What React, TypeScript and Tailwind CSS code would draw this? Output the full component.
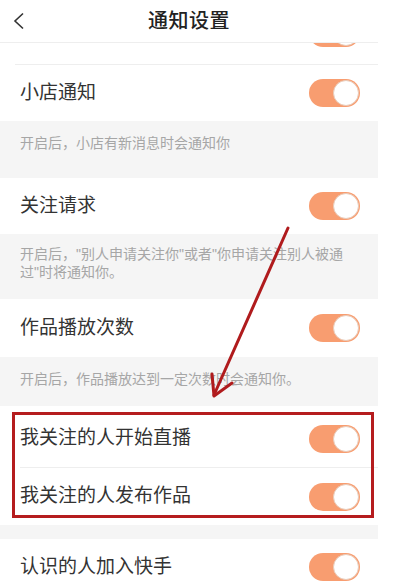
import React from "react";

const font = { fontFamily: '"Liberation Sans", "Noto Sans CJK SC", sans-serif' };

function Toggle() {
  return (
    <div className="w-[51px] h-[28px] rounded-full bg-[#f89d70] flex items-center justify-end pr-px">
      <div className="w-[26px] h-[26px] rounded-full bg-white border border-[#e8cbb9]" />
    </div>
  );
}

function Row({ label, h = "h-[56px]" }: { label: string; h?: string }) {
  return (
    <div className={`${h} flex items-center justify-between pl-5 pr-[18px] bg-white`}>
      <span className="text-[19px] text-[#333333]">{label}</span>
      <Toggle />
    </div>
  );
}

function Desc({ children, cls }: { children: React.ReactNode; cls: string }) {
  return (
    <div className={`bg-[#f5f5f5] px-5 text-[14px] text-[#a6a6a6] ${cls}`}>{children}</div>
  );
}

export default function App() {
  return (
    <div className="relative w-[400px] h-[586px] overflow-hidden bg-white" style={font}>
      <div className="w-[378px] flex flex-col">
        {/* header */}
        <div className="h-[43px] relative flex items-center justify-center border-b border-[#eeeeee] bg-white">
          <svg className="absolute left-[12px] top-[12px]" width="14" height="18" viewBox="0 0 14 18">
            <polyline points="11,1.5 3,9 11,16.5" fill="none" stroke="#333" strokeWidth="1.6" />
          </svg>
          <span className="text-[20px] font-medium text-[#222222] tracking-[0.5px]">通知设置</span>
        </div>

        {/* partly scrolled row */}
        <div className="h-[22px] overflow-hidden border-b border-[#eeeeee] ml-[15px]">
          <div className="-mt-[38px] -ml-[15px]">
            <Row label="私信通知" />
          </div>
        </div>

        <Row label="小店通知" />
        <Desc cls="pt-[12px] pb-[25px] leading-[20px]">开启后，小店有新消息时会通知你</Desc>

        <Row label="关注请求" />
        <Desc cls="pt-[11px] pb-[18px] leading-[18px]">
          开启后，"别人申请关注你"或者"你申请关注别人被通过"时将通知你。
        </Desc>

        <Row label="作品播放次数" h="h-[58px]" />
        <Desc cls="pt-[12px] pb-[17px] leading-[20px]">开启后，作品播放达到一定次数时会通知你。</Desc>

        <div className="pt-[4px] bg-white flex flex-col">
          <Row label="我关注的人开始直播" h="h-[57px]" />
          <div className="ml-5 h-px bg-[#eeeeee]" />
          <Row label="我关注的人发布作品" h="h-[57px]" />
        </div>
        <div className="h-[14px] bg-[#f5f5f5]" />
        <Row label="认识的人加入快手" />
      </div>

      {/* annotation box */}
      <div className="absolute left-[12px] top-[412px] w-[362px] h-[106px] border-[3px] border-[#b51c1e]" />

      {/* annotation arrow */}
      <svg className="absolute left-0 top-0 pointer-events-none" width="400" height="586">
        <line x1="288" y1="228" x2="214" y2="395" stroke="#b01b1d" strokeWidth="3" strokeLinecap="round" />
        <polyline points="212,374 214,396 232,383" fill="none" stroke="#b01b1d" strokeWidth="3" strokeLinecap="round" strokeLinejoin="round" />
      </svg>
    </div>
  );
}
